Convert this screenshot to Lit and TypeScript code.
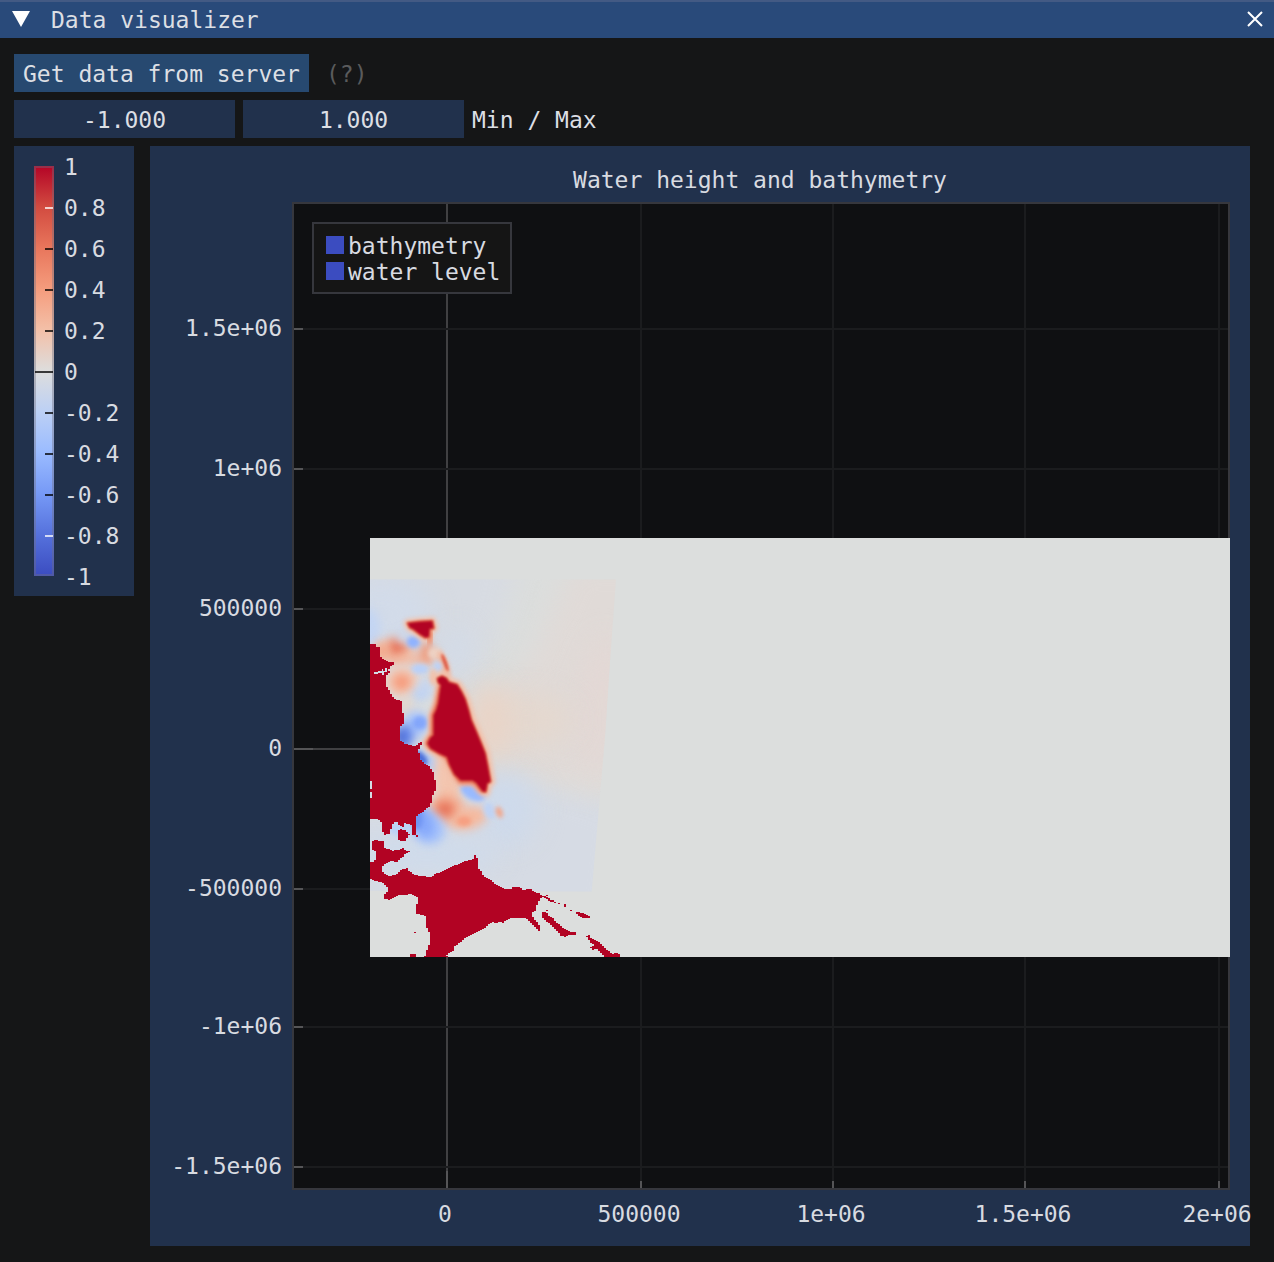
import { LitElement, html, svg, css } from "lit";
import { customElement } from "lit/decorators.js";

type Tick = { at: number; label: string };

const xTicks: Tick[] = [
  { at: 297, label: "0" },
  { at: 491, label: "500000" },
  { at: 683, label: "1e+06" },
  { at: 875, label: "1.5e+06" },
  { at: 1069, label: "2e+06" },
];

const yTicks: Tick[] = [
  { at: 183, label: "1.5e+06" },
  { at: 323, label: "1e+06" },
  { at: 463, label: "500000" },
  { at: 603, label: "0" },
  { at: 743, label: "-500000" },
  { at: 881, label: "-1e+06" },
  { at: 1021, label: "-1.5e+06" },
];

const scaleTicks: Tick[] = ["1", "0.8", "0.6", "0.4", "0.2", "0", "-0.2", "-0.4", "-0.6", "-0.8", "-1"].map(
  (label, i) => ({ at: 21 + i * 41, label })
);

// Coast outlines in grid units; three units make one chart pixel.
const land: string[] = [
  "30,222 45,222 45,228 60,232 60,258 66,264 72,270 84,276 105,277 102,284 90,288 93,294 84,300 90,306 78,318 75,330 80,336 80,350 90,365 95,378 105,388 123,393 123,424 129,428 129,462 123,468 117,474 117,510 129,516 135,522 160,528 174,525 175,518 186,516 184,524 178,532 174,548 182,552 180,566 190,576 198,584 208,590 214,600 222,612 222,628 231,630 225,645 228,658 220,672 214,690 212,705 205,712 190,725 175,733 168,742 168,795 174,796 174,802 165,796 155,794 155,764 135,760 130,770 118,768 115,756 100,758 93,778 90,790 78,792 72,795 66,780 66,765 60,750 45,747 30,747",
  "111,785 118,778 135,780 148,792 145,800 135,812 118,812 111,798",
  "36,813 42,810 70,813 75,825 72,835 90,838 100,842 120,838 130,835 138,842 150,845 135,852 130,860 118,868 112,875 90,874 72,882 66,895 68,905 78,916 95,918 110,912 118,904 126,898 138,895 145,902 160,912 180,919 215,920 225,912 245,906 270,892 300,880 320,872 340,867 343,856 350,860 353,868 353,892 362,900 372,920 390,928 410,946 430,956 455,956 458,951 485,953 488,960 500,960 515,958 522,966 540,970 545,978 560,976 562,984 552,982 538,984 536,1000 528,1010 528,1020 518,1026 516,1038 522,1046 534,1058 538,1068 538,1084 530,1076 518,1064 510,1056 498,1044 450,1044 440,1050 430,1058 420,1054 410,1060 395,1056 380,1070 350,1085 320,1100 300,1118 285,1128 282,1140 270,1148 260,1156 262,1161 192,1161 198,1152 204,1128 210,1122 210,1092 198,1068 198,1038 185,1035 168,1031 168,1005 174,1000 174,982 160,976 155,970 140,974 120,975 100,982 90,990 72,986 70,978 78,970 88,960 80,950 70,942 66,936 50,934 36,928 30,928 30,876 42,874 48,866 48,845 40,842 36,830",
  "560,983 570,983 570,990 582,992 582,998 570,995 562,990",
  "498,957 516,957 516,960 498,960",
  "580,996 587,996 587,999 580,999",
  "592,999 598,999 598,1002 592,1002",
  "609,1001 618,1001 618,1010 609,1010",
  "630,1020 636,1020 636,1023 630,1023",
  "648,1026 658,1026 660,1029 672,1029 678,1036 692,1037 690,1044 668,1044 655,1038",
  "556,1020 562,1020 562,1023 556,1023",
  "543,1029 552,1025 561,1028 565,1038 578,1044 588,1058 603,1067 614,1078 632,1085 648,1088 648,1094 630,1095 615,1101 603,1098 594,1086 578,1070 564,1057 553,1050 543,1038",
  "678,1098 684,1095 692,1097 692,1104 712,1113 728,1126 744,1142 757,1151 775,1149 781,1161 735,1161 723,1148 708,1136 698,1140 692,1132 702,1126 688,1113",
  "162,1086 168,1086 168,1089 162,1089",
  "150,1152 168,1152 168,1161 150,1161",
];

const CELL_W = 6;
const CELL_H = 3;

// Samples each outline on the data grid and returns the covered cells as one path.
function rasterise(shapes: string[]): string {
  let d = "";
  for (const shape of shapes) {
    const pts = shape.split(" ").map((p) => p.split(",").map(Number));
    const ys = pts.map((p) => p[1]);
    const top = Math.floor(Math.min(...ys) / CELL_H) * CELL_H;
    const bottom = Math.max(...ys);
    for (let y = top; y < bottom; y += CELL_H) {
      const mid = y + CELL_H / 2;
      const cuts: number[] = [];
      pts.forEach(([x1, y1], i) => {
        const [x2, y2] = pts[(i + 1) % pts.length];
        if (y1 <= mid !== y2 <= mid) {
          cuts.push(x1 + ((mid - y1) / (y2 - y1)) * (x2 - x1));
        }
      });
      cuts.sort((a, b) => a - b);
      for (let i = 0; i + 1 < cuts.length; i += 2) {
        const from = Math.round(cuts[i] / CELL_W) * CELL_W;
        const to = Math.max(from + CELL_W, Math.round(cuts[i + 1] / CELL_W) * CELL_W);
        d += `M${from} ${y}H${to}V${y + CELL_H}H${from}Z`;
      }
    }
  }
  return d;
}

const landPath = rasterise(land);

// Faint far field: outline and colour
const washes: [string, string][] = [
  ["-80,-80 480,-80 440,120 380,260 330,350 -80,400", "#d7dbe2"],
  ["400,600 500,620 720,690 800,720 760,1060 -80,1060 -80,700 300,700", "#d6dbe4"],
  ["640,-20 900,-20 900,650 720,670 440,600 340,420 400,370 520,250", "#e0dad7"],
];

// Soft anomalies: cx, cy, rx, ry, colour, blur level, rotation
type Blob = [number, number, number, number, string, number, number];
const blobs: Blob[] = [
  [60, 130, 160, 110, "#d2dbe9", 3, 0],
  [20, 175, 40, 60, "#c3d5f3", 2, 0],
  [290, 240, 44, 66, "#d2dbe8", 3, 0],
  [720, 400, 70, 200, "#e3d8d5", 3, 6],
  [500, 450, 140, 80, "#e4d8cf", 3, 0],
  [390, 460, 60, 120, "#e9d4c7", 3, 0],
  [440, 720, 90, 110, "#cedaeb", 3, 0],
  [200, 850, 220, 60, "#cfdbeb", 3, 0],
  [100, 244, 62, 38, "#f2c5af", 2, 0],
  [112, 234, 28, 30, "#e8775d", 2, 0],
  [66, 244, 20, 24, "#f3a587", 2, 0],
  [155, 266, 70, 14, "#f4b99f", 2, 0],
  [125, 335, 50, 46, "#f1cdbb", 2, 0],
  [125, 336, 28, 26, "#f69b7c", 2, 0],
  [200, 248, 20, 34, "#f09a7b", 2, 0],
  [135, 198, 28, 20, "#ccd9ed", 2, 0],
  [160, 216, 20, 18, "#8fb2fe", 1, 0],
  [180, 297, 26, 15, "#b9d0f8", 1, 0],
  [182, 372, 30, 18, "#bcd2f6", 2, -20],
  [195, 350, 16, 22, "#c2d4f3", 2, 0],
  [140, 412, 18, 36, "#e4d6cc", 2, 0],
  [168, 462, 38, 40, "#a9c5fc", 2, 0],
  [180, 458, 22, 20, "#84a7fb", 1, 0],
  [138, 498, 24, 36, "#6c8ff0", 2, 0],
  [122, 502, 14, 28, "#3f5fd0", 2, 0],
  [205, 572, 46, 18, "#a9c7fc", 2, 50],
  [184, 564, 26, 12, "#4468d8", 1, 50],
  [264, 620, 42, 90, "#f3c5af", 2, 0],
  [260, 716, 54, 44, "#f5b296", 2, 0],
  [322, 744, 60, 34, "#f5ba9f", 2, -12],
  [255, 718, 28, 24, "#e7745a", 2, 0],
  [312, 754, 22, 15, "#f69f81", 1, 0],
  [338, 667, 40, 22, "#98baff", 1, 28],
  [388, 722, 16, 26, "#bfd3f5", 1, -20],
  [418, 727, 9, 18, "#f5a283", 1, -20],
  [205, 775, 52, 46, "#a6c3fb", 2, 30],
  [190, 755, 30, 50, "#86a9fc", 2, -20],
  [172, 745, 16, 34, "#7094f3", 1, 0],
  [120, 775, 36, 22, "#bcd1f5", 1, 0],
  [225, 250, 22, 18, "#edd1c3", 1, 0],
  [252, 285, 14, 44, "#f3b79d", 1, -18],
  [255, 278, 6, 28, "#e0614c", 0, -20],
  [233, 290, 13, 15, "#bdd2f6", 1, 0],
  [220, 320, 12, 24, "#f1c4ae", 1, 0],
];

const island =
  "234,326 246,320 258,326 266,338 290,345 302,364 314,388 324,420 332,450 346,482 362,520 374,550 382,590 390,634 380,640 376,664 368,662 350,638 338,630 302,630 284,612 270,584 262,560 236,548 212,534 204,520 212,504 222,496 222,470 222,436 230,420 236,400 240,372 244,346 236,336";
const isle = "144,160 180,156 216,154 220,174 208,176 206,200 196,202 180,192 162,178 150,172";

@customElement("app-root")
export class AppRoot extends LitElement {
  static styles = css`
    :host {
      display: block;
      font-family: "DejaVu Sans Mono", "Liberation Mono", monospace;
      font-size: 23px;
      line-height: 36px;
      color: #dcdfe4;
    }
    .window {
      display: flex;
      flex-direction: column;
      box-sizing: border-box;
      min-height: 100vh;
      background: #151617;
      overflow: hidden;
    }
    .titlebar {
      display: flex;
      align-items: center;
      box-sizing: border-box;
      height: 38px;
      padding: 0 10px;
      border-top: 2px solid #435a84;
      background: #294a7a;
    }
    .title {
      flex: 1;
      margin: 0;
      padding-left: 19px;
      font: inherit;
    }
    button {
      margin: 0;
      padding: 0;
      border: 0;
      background: none;
      color: inherit;
      font: inherit;
    }
    .icon {
      display: block;
      width: 22px;
      height: 22px;
    }
    .icon svg {
      display: block;
      width: 22px;
      height: 22px;
    }
    .titlebar .close {
      margin-right: -2px;
    }
    .body {
      display: flex;
      flex-direction: column;
      gap: 8px;
      padding: 16px 24px 16px 14px;
    }
    .row {
      display: flex;
      gap: 8px;
    }
    .actions {
      gap: 17px;
    }
    .fetch,
    .hint,
    .field,
    .caption {
      box-sizing: border-box;
      height: 38px;
      padding-top: 2px;
    }
    .fetch {
      padding-left: 9px;
      padding-right: 9px;
      background: #274970;
    }
    .hint {
      color: #5a5b5c;
    }
    .field {
      width: 221px;
      margin: 0;
      padding: 2px 0 0;
      border: 0;
      background: #21314c;
      color: inherit;
      font: inherit;
      text-align: center;
    }
    .charts {
      display: flex;
      align-items: flex-start;
      gap: 16px;
    }
    .scale {
      display: block;
      flex: none;
      width: 120px;
      height: 450px;
      background: #21314c;
    }
    .plot {
      display: block;
      flex: 1;
      min-width: 0;
      aspect-ratio: 1;
      overflow: visible;
      background: #21314c;
    }
    text {
      fill: #d8dbe1;
      font-size: 23px;
    }
    .end {
      text-anchor: end;
    }
    .middle {
      text-anchor: middle;
    }
    .cells {
      shape-rendering: crispEdges;
    }
    filter {
      color-interpolation-filters: sRGB;
    }
  `;

  private renderScale() {
    return html`<svg class="scale" viewBox="0 0 120 450" role="img" aria-label="Colour scale">
      <defs>
        <linearGradient id="coolwarm" x1="0" y1="0" x2="0" y2="1">
          <stop offset="0" stop-color="#b40426" />
          <stop offset="0.1" stop-color="#d24b40" />
          <stop offset="0.2" stop-color="#e8765c" />
          <stop offset="0.3" stop-color="#f59c7d" />
          <stop offset="0.4" stop-color="#f3c0a8" />
          <stop offset="0.5" stop-color="#dddddd" />
          <stop offset="0.6" stop-color="#bcd0f5" />
          <stop offset="0.7" stop-color="#9abbff" />
          <stop offset="0.8" stop-color="#7699f6" />
          <stop offset="0.9" stop-color="#5571dc" />
          <stop offset="1" stop-color="#3b4cc0" />
        </linearGradient>
      </defs>
      <rect x="20" y="20" width="20" height="410" fill="url(#coolwarm)" />
      <rect x="21" y="21" width="18" height="408" fill="none" stroke="#6e6e80" stroke-opacity="0.4" stroke-width="2" />
      ${scaleTicks.map((t, i) => {
        const inner = i > 0 && i < 10;
        const light = i === 1 || i === 9;
        return svg`
          ${inner
            ? svg`<rect x=${i === 5 ? 21 : 31} y=${t.at - 1} width=${i === 5 ? 18 : 8} height="2"
                fill=${light ? "#ffffff" : "#000000"} fill-opacity="0.75" />`
            : null}
          <text x="50" y=${t.at + 8}>${t.label}</text>`;
      })}
    </svg>`;
  }

  private renderField() {
    return svg`
      <rect x="220" y="392" width="860" height="419" fill="#dcdedd" />
      <svg x="220" y="392" width="860" height="419" viewBox="30 -96 2580 1257">
        <g clip-path="url(#basin)">
          ${washes.map(([points, fill]) => svg`<polygon points=${points} fill=${fill} filter="url(#soft3)" />`)}
          ${blobs.map(
            ([cx, cy, rx, ry, fill, blur, turn]) => svg`
              <ellipse cx=${cx} cy=${cy} rx=${rx} ry=${ry} fill=${fill}
                transform="rotate(${turn} ${cx} ${cy})" filter="url(#soft${blur})" />`
          )}
          <polygon points=${isle} fill="#f4b79d" stroke="#f3c2ab" stroke-width="26" stroke-linejoin="round" filter="url(#soft1)" />
          <path d="M212 180L208 222" stroke="#ee8f6f" stroke-width="16" filter="url(#soft1)" />
          <polygon points=${isle} fill="#c93a36" stroke="#dc5f49" stroke-width="10" stroke-linejoin="round" filter="url(#soft0)" />
          <polygon points=${isle} fill="#b20323" filter="url(#soft0)" />
          <polygon points=${island} fill="#f4b79d" stroke="#f3c0a9" stroke-width="32" stroke-linejoin="round" filter="url(#soft1)" />
          <path d="M246 346L236 400L222 440V496L206 520L262 556L302 632H344L372 662" fill="none" stroke="#e8765c" stroke-width="20"
            stroke-linejoin="round" filter="url(#soft1)" />
          <polygon points=${island} fill="#c93a36" stroke="#dc5f49" stroke-width="10" stroke-linejoin="round" filter="url(#soft0)" />
          <polygon points=${island} fill="#b20323" stroke="#b20323" stroke-width="2" filter="url(#soft0)" />
        </g>
        <path class="cells" d=${landPath} fill="#b20323" />
        <path class="cells" fill="#d5dce6"
          d="M42 306H54V303H66V297H69V303H75V294H81V306H72V315H66V309H54V312H42ZM30 633H36V657H30ZM30 666H36V684H30Z" />
      </svg>`;
  }

  private renderPlot() {
    return html`<svg class="plot" viewBox="0 0 1100 1100" role="img" aria-label="Water height and bathymetry">
      <defs>
        <clipPath id="basin"><polygon points="30,28 768,28 748,300 735,500 695,965 30,962" /></clipPath>
        ${[3, 7, 14, 38].map(
          (dev, i) => svg`<filter id="soft${i}" x="-150%" y="-150%" width="400%" height="400%">
            <feGaussianBlur stdDeviation=${dev} />
          </filter>`
        )}
      </defs>
      <text class="middle" x="610" y="42">Water height and bathymetry</text>
      <rect x="143" y="57" width="936" height="986" fill="#0f1012" />
      <g class="cells">
        ${xTicks.map(
          (t) => svg`<rect x=${t.at - 1} y="57" width="2" height="986" fill=${t.label === "0" ? "#404042" : "#1b1c1e"} />
            <rect x=${t.at - 1} y=${t.label === "0" ? 1025 : 1035} width="2" height=${t.label === "0" ? 18 : 8} fill="#555557" />`
        )}
        ${yTicks.map(
          (t) => svg`<rect x="143" y=${t.at - 1} width="936" height="2" fill=${t.label === "0" ? "#404042" : "#1b1c1e"} />
            <rect x="143" y=${t.at - 1} width=${t.label === "0" ? 20 : 10} height="2" fill="#555557" />`
        )}
      </g>
      <rect x="143" y="57" width="936" height="986" fill="none" stroke="#36373d" stroke-width="2" />
      ${this.renderField()}
      ${xTicks.map((t) => svg`<text class="middle" x=${t.at - 2} y="1076">${t.label}</text>`)}
      ${yTicks.map((t) => svg`<text class="end" x="132" y=${t.at + 7}>${t.label}</text>`)}
      <rect x="163" y="77" width="198" height="70" fill="#151515" stroke="#36373d" stroke-width="2" />
      <rect x="176" y="90" width="18" height="18" fill="#3b4cc0" />
      <rect x="176" y="116" width="18" height="18" fill="#3b4cc0" />
      <text x="198" y="108">bathymetry</text>
      <text x="198" y="134">water level</text>
    </svg>`;
  }

  render() {
    return html`
      <main class="window">
        <header class="titlebar">
          <button class="icon" aria-label="Collapse">
            <svg viewBox="0 0 22 22"><path d="M2 2H20L11 18Z" fill="#ffffff" /></svg>
          </button>
          <h1 class="title">Data visualizer</h1>
          <button class="icon close" aria-label="Close">
            <svg viewBox="0 0 22 22"><path d="M4 3L18 17M18 3L4 17" stroke="#ffffff" stroke-width="2" /></svg>
          </button>
        </header>
        <div class="body">
          <div class="row actions">
            <button class="fetch">Get data from server</button>
            <span class="hint">(?)</span>
          </div>
          <div class="row">
            <input class="field" id="min" value="-1.000" aria-label="Min" />
            <input class="field" id="max" value="1.000" />
            <label class="caption" for="max">Min / Max</label>
          </div>
          <div class="charts">${this.renderScale()}${this.renderPlot()}</div>
        </div>
      </main>
    `;
  }
}
